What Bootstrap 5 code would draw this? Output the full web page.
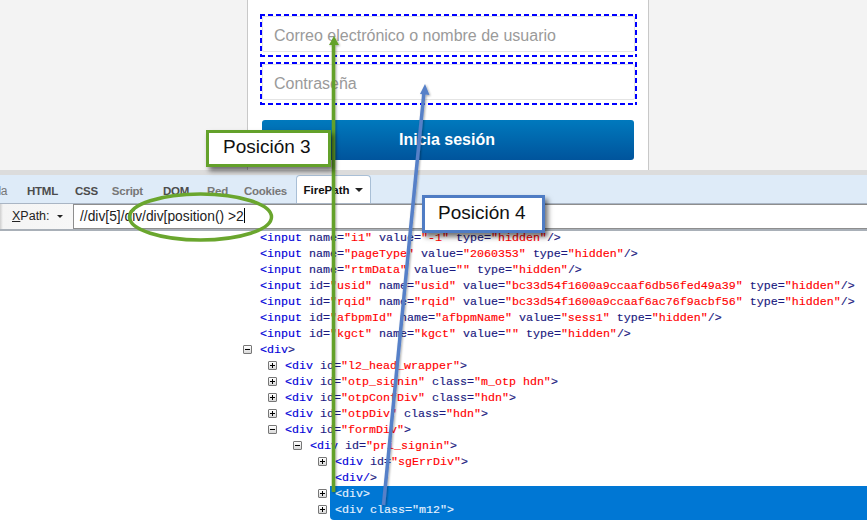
<!DOCTYPE html>
<html lang="es"><head><meta charset="utf-8"><title>FirePath</title>
<link href="https://cdn.jsdelivr.net/npm/bootstrap@5.3.0/dist/css/bootstrap.min.css" rel="stylesheet">
<style>
html,body{height:520px;overflow:hidden;background:#fff}
body{font-family:"Liberation Sans",Arial,sans-serif;position:relative;width:867px}
.login-zone{height:170px;background:#f3f3f3;padding-left:247px}
.login-panel{width:402px;height:170px;background:#fff;border-left:1px solid #c8c8c8;border-right:1px solid #c8c8c8;padding:14px 0 0 12px}
.dash-box{height:43px;width:377px;margin-bottom:5px;padding:2px 0 0 2px;
background:
linear-gradient(90deg,#00f 5px,transparent 5px) 0 0/8px 2px repeat-x,
linear-gradient(90deg,#00f 5px,transparent 5px) 0 100%/8px 2px repeat-x,
linear-gradient(#00f 5px,transparent 5px) 0 0/2px 8px repeat-y,
linear-gradient(#00f 5px,transparent 5px) 100% 0/2px 8px repeat-y}
.dash-box .form-control{height:36px;border:1px solid #e4e4e4;border-radius:2px;padding:4px 11px 0;font-size:16px;line-height:30px;box-shadow:none;background:transparent;width:373px}
.dash-box .form-control::placeholder{color:#9a9a9a;opacity:1}
.login-btn.btn{display:block;width:372px;height:40px;margin:15px 0 0 2px;padding:0;border:0;border-radius:3px;background:linear-gradient(#0079bd,#00549c);color:#fff;font-weight:700;font-size:16px;text-indent:-2px}
.gray-strip{height:5px;background:#dcdcdc}
.fb-tabs{height:29px;background:#deebf8;border-bottom:1px solid #a9b5c4;align-items:flex-end;overflow:hidden;font-size:11.500px;letter-spacing:-.25px;font-weight:700;color:#4c4c4c}
.fb-tab{height:25px;line-height:26px;padding:0 8.500px;white-space:nowrap}
.fb-tab.dim{color:#777}
.fb-tab.tight{margin-right:-3px}
.fb-tab.loose{margin-right:3px}
.fb-tab.wide{margin-right:1px}
.fb-tab.snug{margin-right:-1px}
.fb-tab.clip{width:18.500px;padding:0;text-indent:-8px;overflow:hidden;color:#777;font-weight:400;font-size:12px}
.fb-tab.active{height:28px;line-height:29px;width:75px;background:#fff;border:1px solid #a9bfd6;border-bottom:0;border-radius:4px 4px 0 0;color:#111;padding:0 0 0 7px;letter-spacing:0}
.caret-d{display:inline-block;border:4px solid transparent;border-top-color:#222;border-bottom:0;vertical-align:2px;margin-left:2px}
.caret-s{border-width:3px;border-bottom:0;margin-left:7px}
.fb-toolbar{height:27px;background:linear-gradient(90deg,#cfcfcf,#f4f4f4 3px,#f7f7f7 73px,#fff 73px);border-bottom:2px solid #a9b0b8;color:#222;padding-left:12px}
.xpath-label{width:61px;font-size:12.500px}
.xpath-field{flex:1;height:25px;border:1px solid #8e8e8e;border-right:0;font-size:13.800px;line-height:23px;padding-left:6px;color:#222;background:#fff}
.caret-cursor{display:inline-block;width:1px;height:15px;background:#000;vertical-align:-2px}
.code-pane{font-family:"Liberation Mono","Courier New",monospace;font-size:11.67px;line-height:16px;margin-top:-1px;-webkit-text-stroke:.15px}
.code-row{height:16px;white-space:pre;position:relative;padding-left:260px}
.ind1{padding-left:285px}.ind2{padding-left:310px}.ind3{padding-left:335px}
.flush{padding-left:0}
.t{color:#0000d8}.k{color:#1a1a80}.v{color:#f00}
.sel-area{background:#0077d4;margin-left:330px;padding-left:5px;color:#e6f2ff;height:16px;white-space:pre}
.sel-area.last{border-bottom-left-radius:4px;height:18px}
.twist{position:absolute;width:9px;height:9px;border:1px solid #777;background:linear-gradient(#fff,#d8d8d8);top:3px;border-radius:1px}
.twist::before{content:"";position:absolute;left:1px;right:1px;top:3px;height:1px;background:#000}
.twist.plus::after{content:"";position:absolute;top:1px;bottom:1px;left:3px;width:1px;background:#000}
.tw0{left:243px}.tw1{left:268px}.tw2{left:293px}.tw3{left:318px}
.overlay-art{position:absolute;left:0;top:0;pointer-events:none}
.callout{position:absolute;background:#fff;font-size:19px;color:#111;display:flex;align-items:center;box-shadow:3px 4px 5px rgba(0,0,0,.55)}
.callout-g{left:206px;top:130px;width:125px;height:37px;border:3px solid #63a12a;padding:0 0 2px 14px}
.callout-b{left:422px;top:195px;width:123px;height:38px;border:3px solid #4f7cc4;padding:0 0 1px 13px}
</style></head><body>
<section class="login-zone"><div class="login-panel">
<div class="dash-box"><input class="form-control" placeholder="Correo electrónico o nombre de usuario"></div>
<div class="dash-box"><input class="form-control" placeholder="Contraseña"></div>
<button class="btn login-btn">Inicia sesión</button>
</div></section>
<div class="gray-strip"></div>
<nav class="fb-tabs d-flex">
<span class="fb-tab clip">ola</span><span class="fb-tab">HTML</span><span class="fb-tab tight">CSS</span><span class="fb-tab dim loose">Script</span><span class="fb-tab wide">DOM</span><span class="fb-tab dim snug">Red</span><span class="fb-tab dim">Cookies</span><span class="fb-tab active">FirePath <i class="caret-d"></i></span>
</nav>
<div class="fb-toolbar d-flex align-items-center">
<span class="xpath-label"><u>X</u>Path:<i class="caret-d caret-s"></i></span>
<div class="xpath-field">//div[5]/div/div[position() &gt;2<i class="caret-cursor"></i></div>
</div>
<main class="code-pane">
<div class="code-row"><span class="t">&lt;input</span> <span class="k">name=</span><span class="v">"i1"</span> <span class="k">value=</span><span class="v">"-1"</span> <span class="k">type=</span><span class="v">"hidden"</span><span class="k">/&gt;</span></div>
<div class="code-row"><span class="t">&lt;input</span> <span class="k">name=</span><span class="v">"pageType"</span> <span class="k">value=</span><span class="v">"2060353"</span> <span class="k">type=</span><span class="v">"hidden"</span><span class="k">/&gt;</span></div>
<div class="code-row"><span class="t">&lt;input</span> <span class="k">name=</span><span class="v">"rtmData"</span> <span class="k">value=</span><span class="v">""</span> <span class="k">type=</span><span class="v">"hidden"</span><span class="k">/&gt;</span></div>
<div class="code-row"><span class="t">&lt;input</span> <span class="k">id=</span><span class="v">"usid"</span> <span class="k">name=</span><span class="v">"usid"</span> <span class="k">value=</span><span class="v">"bc33d54f1600a9ccaaf6db56fed49a39"</span> <span class="k">type=</span><span class="v">"hidden"</span><span class="k">/&gt;</span></div>
<div class="code-row"><span class="t">&lt;input</span> <span class="k">id=</span><span class="v">"rqid"</span> <span class="k">name=</span><span class="v">"rqid"</span> <span class="k">value=</span><span class="v">"bc33d54f1600a9ccaaf6ac76f9acbf56"</span> <span class="k">type=</span><span class="v">"hidden"</span><span class="k">/&gt;</span></div>
<div class="code-row"><span class="t">&lt;input</span> <span class="k">id=</span><span class="v">"afbpmId"</span> <span class="k">name=</span><span class="v">"afbpmName"</span> <span class="k">value=</span><span class="v">"sess1"</span> <span class="k">type=</span><span class="v">"hidden"</span><span class="k">/&gt;</span></div>
<div class="code-row"><span class="t">&lt;input</span> <span class="k">id=</span><span class="v">"kgct"</span> <span class="k">name=</span><span class="v">"kgct"</span> <span class="k">value=</span><span class="v">""</span> <span class="k">type=</span><span class="v">"hidden"</span><span class="k">/&gt;</span></div>
<div class="code-row"><i class="twist tw0"></i><span class="t">&lt;div</span><span class="k">&gt;</span></div>
<div class="code-row ind1"><i class="twist plus tw1"></i><span class="t">&lt;div</span> <span class="k">id=</span><span class="v">"l2_head_wrapper"</span><span class="k">&gt;</span></div>
<div class="code-row ind1"><i class="twist plus tw1"></i><span class="t">&lt;div</span> <span class="k">id=</span><span class="v">"otp_signin"</span> <span class="k">class=</span><span class="v">"m_otp hdn"</span><span class="k">&gt;</span></div>
<div class="code-row ind1"><i class="twist plus tw1"></i><span class="t">&lt;div</span> <span class="k">id=</span><span class="v">"otpConfDiv"</span> <span class="k">class=</span><span class="v">"hdn"</span><span class="k">&gt;</span></div>
<div class="code-row ind1"><i class="twist plus tw1"></i><span class="t">&lt;div</span> <span class="k">id=</span><span class="v">"otpDiv"</span> <span class="k">class=</span><span class="v">"hdn"</span><span class="k">&gt;</span></div>
<div class="code-row ind1"><i class="twist tw1"></i><span class="t">&lt;div</span> <span class="k">id=</span><span class="v">"formDiv"</span><span class="k">&gt;</span></div>
<div class="code-row ind2"><i class="twist tw2"></i><span class="t">&lt;div</span> <span class="k">id=</span><span class="v">"pri_signin"</span><span class="k">&gt;</span></div>
<div class="code-row ind3"><i class="twist plus tw3"></i><span class="t">&lt;div</span> <span class="k">id=</span><span class="v">"sgErrDiv"</span><span class="k">&gt;</span></div>
<div class="code-row ind3"><span class="t">&lt;div/</span><span class="k">&gt;</span></div>
<div class="code-row flush"><i class="twist plus tw3"></i><div class="sel-area">&lt;div&gt;</div></div>
<div class="code-row flush"><i class="twist plus tw3"></i><div class="sel-area last">&lt;div class="m12"&gt;</div></div>
</main>
<svg class="overlay-art" width="867" height="520" viewBox="0 0 867 520">
<defs><filter id="sh" x="-50%" y="-5%" width="200%" height="110%"><feDropShadow dx="1" dy="1" stdDeviation="1" flood-opacity=".35"/></filter></defs>
<ellipse cx="200.500" cy="217" rx="71" ry="23" fill="none" stroke="#6aa62e" stroke-width="3.500"/>
<g filter="url(#sh)">
<path d="M333.500 492V45" stroke="#63a12a" stroke-width="3.500" fill="none"/><path d="M334 36l5 9h-10z" fill="#63a12a"/>
<path d="M383.500 505L424 92" stroke="#5680c8" stroke-width="3.500" fill="none"/><path d="M425 84l4.500 11-9.500-1z" fill="#5680c8"/>
</g>
</svg>
<div class="callout callout-g">Posición 3</div>
<div class="callout callout-b">Posición 4</div>
</body></html>
